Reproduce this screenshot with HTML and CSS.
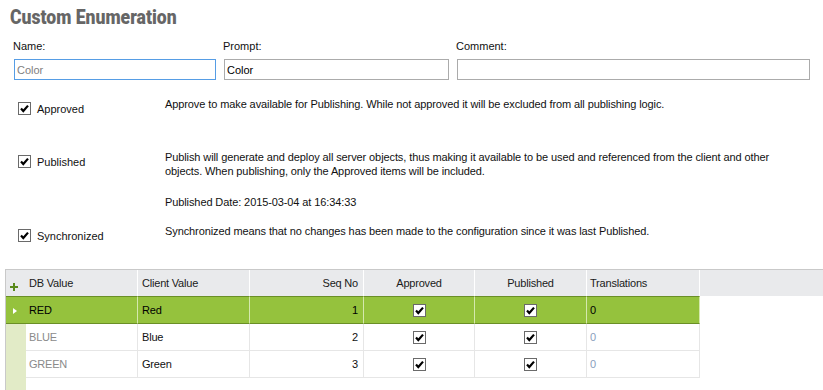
FILE: index.html
```html
<!DOCTYPE html>
<html lang="en">
<head>
    <meta charset="UTF-8">
    <meta name="viewport" content="width=device-width, initial-scale=1.0">
    <title>Custom Enumeration</title>
    <link rel="stylesheet" href="styles.css">
</head>
<body>
    <div class="page">
        <h1 class="title">Custom Enumeration</h1>

        <div class="fields">
            <div class="field">
                <label>Name:</label>
                <input type="text" class="input input-focus input-muted" value="Color">
            </div>
            <div class="field">
                <label>Prompt:</label>
                <input type="text" class="input" value="Color">
            </div>
            <div class="field">
                <label>Comment:</label>
                <input type="text" class="input" value="">
            </div>
        </div>

        <div class="options">
            <div class="option option-approved">
                <div class="option-check">
                    <span class="check"><svg viewBox="0 0 11 11"><path d="M2 5.5 L4.3 8 L9 2.6"/></svg></span>
                    <span>Approved</span>
                </div>
                <div class="option-desc">
                    <p>Approve to make available for Publishing. While not approved it will be excluded from all publishing logic.</p>
                </div>
            </div>
            <div class="option option-published">
                <div class="option-check">
                    <span class="check"><svg viewBox="0 0 11 11"><path d="M2 5.5 L4.3 8 L9 2.6"/></svg></span>
                    <span>Published</span>
                </div>
                <div class="option-desc">
                    <p>Publish will generate and deploy all server objects, thus making it available to be used and referenced from the client and other<br>objects. When publishing, only the Approved items will be included.</p>
                    <p class="published-date">Published Date: 2015-03-04 at 16:34:33</p>
                </div>
            </div>
            <div class="option option-sync">
                <div class="option-check">
                    <span class="check"><svg viewBox="0 0 11 11"><path d="M2 5.5 L4.3 8 L9 2.6"/></svg></span>
                    <span>Synchronized</span>
                </div>
                <div class="option-desc">
                    <p>Synchronized means that no changes has been made to the configuration since it was last Published.</p>
                </div>
            </div>
        </div>

        <div class="grid">
            <table>
                <thead>
                    <tr>
                        <th class="col-ind"><svg class="plus" viewBox="0 0 8 8"><path d="M4 0 V8 M0 4 H8"/></svg></th>
                        <th class="col-db">DB Value</th>
                        <th class="col-client">Client Value</th>
                        <th class="col-seq num">Seq No</th>
                        <th class="col-appr center">Approved</th>
                        <th class="col-pub center">Published</th>
                        <th class="col-trans">Translations</th>
                        <th class="col-fill"></th>
                    </tr>
                </thead>
                <tbody>
                    <tr class="selected">
                        <td class="col-ind"><span class="arrow"></span></td>
                        <td class="col-db">RED</td>
                        <td class="col-client">Red</td>
                        <td class="num">1</td>
                        <td class="center"><span class="check"><svg viewBox="0 0 11 11"><path d="M2 5.5 L4.3 8 L9 2.6"/></svg></span></td>
                        <td class="center"><span class="check"><svg viewBox="0 0 11 11"><path d="M2 5.5 L4.3 8 L9 2.6"/></svg></span></td>
                        <td class="trans">0</td>
                        <td class="col-fill"></td>
                    </tr>
                    <tr>
                        <td class="col-ind"></td>
                        <td class="col-db">BLUE</td>
                        <td class="col-client">Blue</td>
                        <td class="num">2</td>
                        <td class="center"><span class="check"><svg viewBox="0 0 11 11"><path d="M2 5.5 L4.3 8 L9 2.6"/></svg></span></td>
                        <td class="center"><span class="check"><svg viewBox="0 0 11 11"><path d="M2 5.5 L4.3 8 L9 2.6"/></svg></span></td>
                        <td class="trans">0</td>
                        <td class="col-fill"></td>
                    </tr>
                    <tr>
                        <td class="col-ind"></td>
                        <td class="col-db">GREEN</td>
                        <td class="col-client">Green</td>
                        <td class="num">3</td>
                        <td class="center"><span class="check"><svg viewBox="0 0 11 11"><path d="M2 5.5 L4.3 8 L9 2.6"/></svg></span></td>
                        <td class="center"><span class="check"><svg viewBox="0 0 11 11"><path d="M2 5.5 L4.3 8 L9 2.6"/></svg></span></td>
                        <td class="trans">0</td>
                        <td class="col-fill"></td>
                    </tr>
                </tbody>
            </table>
        </div>
    </div>
</body>
</html>
```

FILE: styles.css
```css
html, body {
    margin: 0;
    padding: 0;
    background-color: #fff;
}

body {
    font-family: "Liberation Sans", Arial, sans-serif;
    font-size: 11px;
    color: #111;
    overflow: hidden;
}

.page {
    display: flex;
    flex-direction: column;
    height: 100vh;
}

.title {
    margin: 5px 0 0 10px;
    font-family: "Roboto", "Liberation Sans", sans-serif;
    font-size: 20px;
    line-height: 24px;
    font-weight: 900;
    color: #666;
    transform: scaleX(0.88);
    transform-origin: left center;
}

/* Name / Prompt / Comment */
.fields {
    display: grid;
    grid-template-columns: 202px 225px 353px;
    column-gap: 8px;
    margin: 10px 0 0 14px;
}

.field label {
    display: block;
    line-height: 14px;
    margin-left: -1px;
    margin-bottom: 6px;
}

.input {
    box-sizing: border-box;
    width: 100%;
    height: 21px;
    margin: 0;
    padding: 0 2px;
    border: 1px solid #ababab;
    font-family: inherit;
    font-size: 11px;
    color: #000;
    outline: none;
}

.input-focus {
    border-color: #569de5;
}

.input-muted {
    color: #808080;
}

/* checkbox rows */
.options {
    margin: 17px 0 0 18px;
    letter-spacing: -0.1px;
}

.option {
    display: flex;
    align-items: flex-start;
}

.option-published {
    margin-top: 39px;
}

.option-sync {
    margin-top: 15px;
}

.option-check {
    display: flex;
    align-items: center;
    gap: 6px;
    width: 147px;
    flex: none;
    padding-top: 5px;
    height: 13px;
    margin-bottom: -4px;
    letter-spacing: 0;
}

.option-desc p {
    margin: 0;
    line-height: 14px;
}

.option-desc .published-date {
    margin-top: 17px;
}

.check {
    display: inline-block;
    box-sizing: border-box;
    width: 13px;
    height: 13px;
    border: 1px solid #6a6a6a;
    background-color: #fff;
    vertical-align: middle;
}

.check svg {
    display: block;
    width: 11px;
    height: 11px;
    fill: none;
    stroke: #000;
    stroke-width: 2.2;
}

/* data grid */
.grid {
    flex: 1;
    margin: 31px 0 0 5px;
    border-top: 1px solid #c9c9c9;
    border-left: 1px solid #c9c9c9;
    background: linear-gradient(to right, #e2ebc7 20px, #fff 20px);
}

.grid table {
    width: 818px;
    table-layout: fixed;
    border-collapse: separate;
    border-spacing: 0;
    letter-spacing: -0.2px;
}

.grid th,
.grid td {
    height: 26px;
    padding: 0 3px;
    text-align: left;
    white-space: nowrap;
    overflow: hidden;
    box-sizing: content-box;
}

.grid th {
    background-color: #e9eaec;
    font-weight: normal;
    color: #1a1a1a;
    border-right: 1px solid #fff;
}

.grid td {
    border-right: 1px solid #e6e6e6;
    border-bottom: 1px solid #e6e6e6;
    background-color: #fff;
}

.grid .col-ind {
    width: 20px;
    padding: 0;
    border-right: none;
    position: relative;
}

.grid td.col-ind {
    background-color: #e2ebc7;
    border-bottom: none;
}

.grid .col-db { width: 105px; }
.grid .col-client { width: 104px; padding-left: 4px; }
.grid .col-seq { width: 105px; }
.grid .col-appr { width: 104px; }
.grid .col-pub { width: 105px; }
.grid .col-trans { width: 106px; }

.grid th.col-fill {
    border-right: none;
}

.grid td.col-fill {
    border: none;
    background-color: #fff;
}

.grid .num {
    text-align: right;
    padding-right: 5px;
}

.grid .center {
    text-align: center;
}

.grid .center .check {
    vertical-align: middle;
}

.grid tbody td.col-db {
    color: #8a8a8a;
}

.grid tbody td.trans {
    color: #8aa0bd;
}

.grid tr.selected td {
    background-color: #95c23d;
    color: #000;
    border-top: 1px solid #6a8f26;
    border-bottom: 1px solid #6a8f26;
    border-right-color: #d5e8ae;
}

.grid tr.selected td.col-db,
.grid tr.selected td.trans {
    color: #000;
}

.grid tr.selected td.col-fill {
    background-color: #fff;
    border: none;
}

.plus {
    position: absolute;
    left: 4px;
    top: 13px;
    width: 8px;
    height: 8px;
    fill: none;
    stroke: #5a8a1c;
    stroke-width: 2;
}

.arrow {
    position: absolute;
    left: 7px;
    top: 11px;
    width: 0;
    height: 0;
    border-top: 3px solid transparent;
    border-bottom: 3px solid transparent;
    border-left: 4px solid #fff;
}
```
